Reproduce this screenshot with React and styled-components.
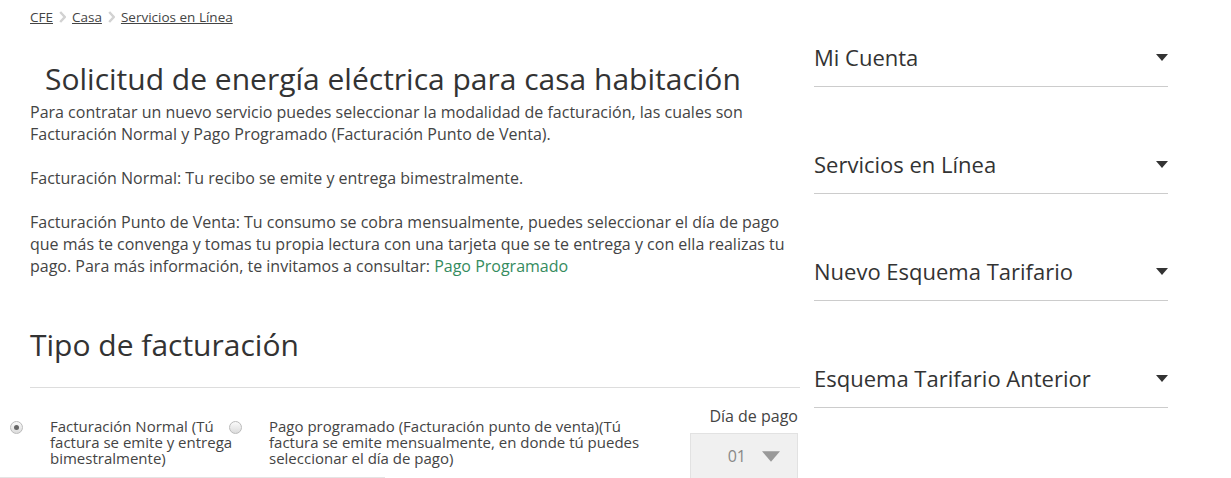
import React from 'react'
import styled, { createGlobalStyle } from 'styled-components'

const Global = createGlobalStyle`
  html, body {
    margin: 0;
    padding: 0;
    background: #fff;
    overflow: hidden;
  }
  body {
    font-family: "Open Sans", "Liberation Sans", sans-serif;
    color: #444;
  }
`

const Page = styled.div`
  display: flex;
  align-items: flex-start;
  gap: 14px;
  padding-left: 30px;
  height: 478px;
  overflow: hidden;
`

const Main = styled.div`
  width: 770px;
  flex: 0 0 770px;
`

const Crumbs = styled.nav`
  display: flex;
  align-items: center;
  gap: 5px;
  padding-top: 8px;
  font-size: 13.5px;
  line-height: 18px;
`

const Crumb = styled.a`
  color: #444;
  text-decoration: underline;
`

const Sep = styled.svg`
  width: 7px;
  height: 12px;
  margin: 0 1px;
`

const Title = styled.h1`
  margin: 33px 0 2px 15px;
  font-size: 30px;
  font-weight: 400;
  line-height: 40px;
  color: #333;
`

const Para = styled.p`
  margin: 0 0 22px;
  font-size: 16px;
  line-height: 22px;
  color: #444;
`

const Link = styled.a`
  color: #358b5e;
  text-decoration: none;
`

const Section = styled.h2`
  margin: 48px 0 0;
  padding-bottom: 22px;
  border-bottom: 1px solid #ddd;
  font-size: 30px;
  font-weight: 400;
  line-height: 40px;
  color: #333;
`

const Options = styled.div`
  display: flex;
  align-items: flex-start;
  margin-left: -20px;
  padding-top: 20px;
`

const Option = styled.label`
  display: flex;
  align-items: flex-start;
  width: ${p => p.$w}px;
  flex: 0 0 ${p => p.$w}px;
  font-size: 15px;
  line-height: 16px;
  color: #444;
`

const RadioBox = styled.span`
  flex: 0 0 auto;
  width: 13px;
  height: 13px;
  margin: 13px 27px 0 0;
  border-radius: 50%;
  border: 1px solid #bbb;
  background: linear-gradient(#fafafa, #dcdcdc);
  box-sizing: border-box;
  display: flex;
  align-items: center;
  justify-content: center;
  &::after {
    content: '';
    width: 5px;
    height: 5px;
    border-radius: 50%;
    background: ${p => (p.$checked ? '#666' : 'transparent')};
  }
`

const OptionText = styled.span`
  flex: 0 0 ${p => p.$w}px;
  padding-top: 10px;
`

const DayBox = styled.div`
  margin: -2px 2px 0 auto;
  display: flex;
  flex-direction: column;
  align-items: flex-end;
  width: 110px;
`

const DayLabel = styled.div`
  font-size: 16px;
  line-height: 20px;
  color: #444;
  padding-bottom: 7px;
`

const Select = styled.div`
  width: 108px;
  height: 46px;
  box-sizing: border-box;
  background: #f0f0f0;
  border: 1px solid #e2e2e2;
  display: flex;
  align-items: center;
  justify-content: flex-end;
  gap: 16px;
  padding-right: 17px;
  font-size: 16px;
  color: #888;
`

const Bottom = styled.div`
  margin: -2px 0 0 -30px;
  width: 385px;
  border-top: 1px solid #e4e4e4;
`

const Side = styled.aside`
  width: 354px;
  flex: 0 0 354px;
  padding-top: 42px;
`

const SideItem = styled.div`
  display: flex;
  align-items: center;
  justify-content: space-between;
  padding-bottom: 14px;
  margin-bottom: 62px;
  border-bottom: 1px solid #ccc;
  font-size: 22px;
  line-height: 30px;
  color: #333;
`

const Chevron = () => (
  <Sep viewBox="0 0 7 12">
    <path d="M1.2 1 L5.8 6 L1.2 11" fill="none" stroke="#d2d2d2" strokeWidth="2.4" />
  </Sep>
)

const Caret = ({ color = '#333', w = 12, h = 7 }) => (
  <svg width={w} height={h} viewBox="0 0 12 7">
    <path d="M0 0 H12 L6 7 Z" fill={color} />
  </svg>
)

const menu = [
  'Mi Cuenta',
  'Servicios en Línea',
  'Nuevo Esquema Tarifario',
  'Esquema Tarifario Anterior',
  'Información de tu Consumo',
]

export default function App() {
  return (
    <>
      <Global />
      <Page>
        <Main>
          <Crumbs>
            <Crumb href="#">CFE</Crumb>
            <Chevron />
            <Crumb href="#">Casa</Crumb>
            <Chevron />
            <Crumb href="#">Servicios en Línea</Crumb>
          </Crumbs>
          <Title>Solicitud de energía eléctrica para casa habitación</Title>
          <Para>
            Para contratar un nuevo servicio puedes seleccionar la modalidad de facturación, las cuales son
            Facturación Normal y Pago Programado (Facturación Punto de Venta).
          </Para>
          <Para>Facturación Normal: Tu recibo se emite y entrega bimestralmente.</Para>
          <Para>
            Facturación Punto de Venta: Tu consumo se cobra mensualmente, puedes seleccionar el día de pago
            que más te convenga y tomas tu propia lectura con una tarjeta que se te entrega y con ella realizas tu
            pago. Para más información, te invitamos a consultar: <Link href="#">Pago Programado</Link>
          </Para>
          <Section>Tipo de facturación</Section>
          <Options>
            <Option $w={219}>
              <RadioBox $checked />
              <OptionText $w={184}>Facturación Normal (Tú factura se emite y entrega bimestralmente)</OptionText>
            </Option>
            <Option $w={420}>
              <RadioBox />
              <OptionText $w={375}>
                Pago programado (Facturación punto de venta)(Tú factura se emite mensualmente, en donde tú puedes
                seleccionar el día de pago)
              </OptionText>
            </Option>
            <DayBox>
              <DayLabel>Día de pago</DayLabel>
              <Select>
                <span>01</span>
                <Caret color="#999" w={18} h={11} />
              </Select>
            </DayBox>
          </Options>
          <Bottom />
        </Main>
        <Side>
          {menu.map(m => (
            <SideItem key={m}>
              <span>{m}</span>
              <Caret />
            </SideItem>
          ))}
        </Side>
      </Page>
    </>
  )
}
